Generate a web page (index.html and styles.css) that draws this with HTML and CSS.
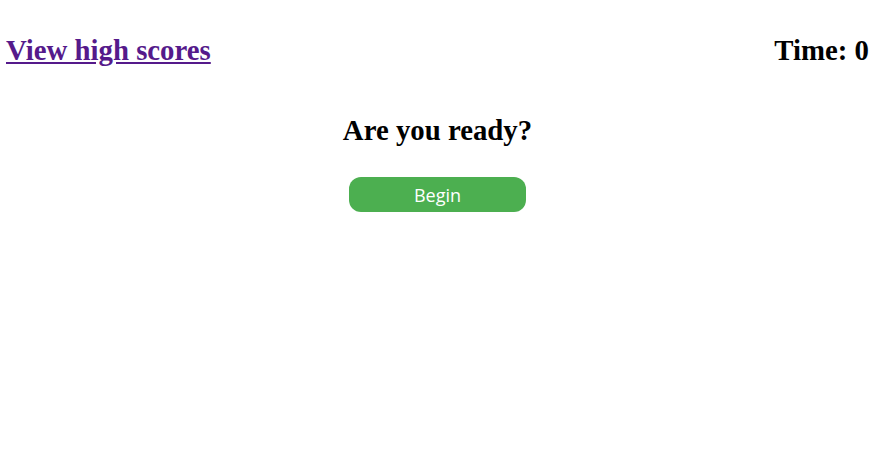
FILE: index.html
```html
<!DOCTYPE html>
<html>
<head>
<meta charset="utf-8">
<link rel="stylesheet" href="styles.css">
</head>
<body>
<header class="top">
  <h2 class="title"><a href="#" class="scores">View high scores</a></h2>
  <h2 class="title">Time: <span>0</span></h2>
</header>
<main class="quiz">
  <h2 class="ready">Are you ready?</h2>
  <button class="begin">Begin</button>
</main>
</body>
</html>
```
FILE: styles.css
```css
body {
  margin: 0;
  font-family: "Liberation Serif", serif;
  background: #fff;
  color: #000;
}
.top {
  display: flex;
  justify-content: space-between;
  align-items: center;
  padding: 0 6px 0 6px;
  margin-top: 34px;
}
.title {
  font-size: 28.8px;
  font-weight: bold;
  margin: 0;
}
.scores {
  color: #551a8b;
}
.quiz {
  display: flex;
  flex-direction: column;
  align-items: center;
  margin-top: 47px;
}
.ready {
  font-size: 28.8px;
  margin: 0;
}
.begin {
  margin-top: 30px;
  width: 177px;
  height: 35px;
  background: #4caf50;
  color: #fff;
  border: none;
  border-radius: 12px;
  font-family: "Open Sans", sans-serif;
  font-size: 18px;
  padding: 0;
}
```
